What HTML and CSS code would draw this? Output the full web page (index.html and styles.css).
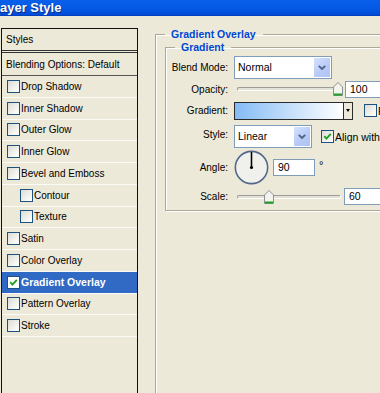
FILE: index.html
```html
<!DOCTYPE html>
<html lang="en">
<head>
	<meta charset="UTF-8">
	<title>Layer Style</title>
	<link rel="stylesheet" href="styles.css">
</head>
<body>
	<div class="titlebar"><span>Layer Style</span></div>
	<div class="main">
		<ul class="styles-list">
			<li class="head">Styles</li>
			<li class="blend">Blending Options: Default</li>
			<li><span class="cb"></span>Drop Shadow</li>
			<li><span class="cb"></span>Inner Shadow</li>
			<li><span class="cb"></span>Outer Glow</li>
			<li><span class="cb"></span>Inner Glow</li>
			<li><span class="cb"></span>Bevel and Emboss</li>
			<li class="sub"><span class="cb"></span>Contour</li>
			<li class="sub"><span class="cb"></span>Texture</li>
			<li><span class="cb"></span>Satin</li>
			<li><span class="cb"></span>Color Overlay</li>
			<li class="sel"><span class="cb on"><svg viewBox="0 0 11 11"><path d="M2.3 5.2 L4.4 7.6 L8.8 2.8"/></svg></span>Gradient Overlay</li>
			<li><span class="cb"></span>Pattern Overlay</li>
			<li><span class="cb"></span>Stroke</li>
		</ul>

		<fieldset class="group outer">
			<legend>Gradient Overlay</legend>
			<fieldset class="group inner">
				<legend>Gradient</legend>

				<div class="row r-blend">
					<label>Blend Mode:</label>
					<div class="combo c-blend"><span>Normal</span><i class="drop"><svg viewBox="0 0 8 5"><path d="M0.8 0.8 L4 4 L7.2 0.8"/></svg></i></div>
				</div>

				<div class="row r-opacity">
					<label>Opacity:</label>
					<div class="slider">
						<div class="track"></div>
						<svg class="thumb" style="left:96px" viewBox="0 0 10 14"><polygon points="0.5,13.5 0.5,5 5,0.5 9.5,5 9.5,13.5"/><line x1="1" y1="12.5" x2="9" y2="12.5"/></svg>
					</div>
					<div class="field f-opacity">100</div>
				</div>

				<div class="row r-gradient">
					<label>Gradient:</label>
					<div class="grad"><div class="grad-fill"></div><div class="grad-btn"></div></div>
					<span class="cb cb-rev"></span><span class="cb-text">Reverse</span>
				</div>

				<div class="row r-style">
					<label>Style:</label>
					<div class="combo c-style"><span>Linear</span><i class="drop"><svg viewBox="0 0 8 5"><path d="M0.8 0.8 L4 4 L7.2 0.8"/></svg></i></div>
					<span class="cb on cb-align"><svg viewBox="0 0 11 11"><path d="M2.3 5.2 L4.4 7.6 L8.8 2.8"/></svg></span><span class="cb-text">Align with Layer</span>
				</div>

				<div class="row r-angle">
					<label>Angle:</label>
					<div class="dial"><svg viewBox="0 0 36 36"><circle cx="18" cy="18" r="16.6"/><line x1="18" y1="2" x2="18" y2="18"/><circle class="dot" cx="18" cy="18" r="1.6"/></svg></div>
					<div class="field f-angle">90</div>
					<span class="deg">°</span>
				</div>

				<div class="row r-scale">
					<label>Scale:</label>
					<div class="slider">
						<div class="track"></div>
						<svg class="thumb" style="left:27px" viewBox="0 0 10 14"><polygon points="0.5,13.5 0.5,5 5,0.5 9.5,5 9.5,13.5"/><line x1="1" y1="12.5" x2="9" y2="12.5"/></svg>
					</div>
					<div class="field f-scale">60</div>
				</div>
			</fieldset>
		</fieldset>
	</div>
</body>
</html>
```

FILE: styles.css
```css
*{
	margin: 0;
	padding: 0;
	box-sizing: border-box;
}
body{
	width: 380px;
	height: 393px;
	overflow: hidden;
	background: #ECE9D8;
	font-family: "Liberation Sans", Arial, sans-serif;
	font-size: 10px;
	color: #000;
}
.titlebar{
	height: 16px;
	background: linear-gradient(#0A5FEA, #0358E4 60%, #004BD6);
	border-bottom: 1px solid #0040C0;
	overflow: hidden;
}
.titlebar span{
	display: block;
	margin-left: -8px;
	line-height: 16px;
	font-size: 13px;
	font-weight: bold;
	color: #fff;
	text-shadow: 1px 1px 0 #0A2B8A;
}
.main{
	display: flex;
	align-items: flex-start;
}

/* left list */
.styles-list{
	flex: none;
	list-style: none;
	width: 137px;
	height: 400px;
	margin: 12px 0 0 1px;
	border: 1px solid #111;
	border-bottom: none;
}
.styles-list li{
	display: flex;
	align-items: center;
	height: 21.75px;
	padding-left: 5px;
	border-bottom: 1px solid #FBFBF7;
	white-space: nowrap;
}
.styles-list li.head{
	height: 24px;
	padding-left: 4px;
	border-bottom: 3px double #333;
}
.styles-list li.blend{
	height: 23px;
	padding-left: 4px;
	border-bottom: 1px solid #555;
}
.styles-list li.sub{
	padding-left: 18px;
}
.styles-list li.sel{
	background: #316AC5;
	color: #fff;
	font-weight: bold;
	font-size: 10.5px;
}
.cb{
	display: inline-block;
	flex: none;
	width: 13px;
	height: 13px;
	margin-right: 1px;
	border: 1px solid #1C5180;
	background: linear-gradient(135deg, #DCDCD4, #F6F6F3 70%, #fff);
}
.cb svg{
	display: block;
	width: 11px;
	height: 11px;
}
.cb svg path{
	fill: none;
	stroke: #21A121;
	stroke-width: 1.9;
}
.sel .cb{
	background: #fff;
}

/* right groups */
.group{
	border: 1px solid #ACA899;
	box-shadow: inset 1px 1px 0 #fff, 1px 1px 0 #fff;
}
.group legend{
	padding: 0 7px 0 6px;
	line-height: 13px;
	font-size: 10.5px;
	font-weight: bold;
	color: #0046D5;
}
.outer{
	flex: none;
	width: 300px;
	height: 400px;
	margin: 12px 0 0 17px;
	padding: 0 0 0 9px;
}
.inner{
	width: 280px;
	padding: 2px 0 5px 0;
}
.inner > legend{
	margin-left: 9px;
}
.row{
	display: flex;
	align-items: center;
}
.row label{
	flex: none;
	width: 62px;
	margin-right: 6px;
	text-align: right;
	white-space: nowrap;
}
.r-blend{
	height: 23px;
	margin-bottom: 1px;
}
.r-opacity{
	height: 18px;
	margin-bottom: 4px;
}
.r-gradient{
	height: 17px;
	margin-bottom: 6px;
}
.r-style{
	height: 23px;
	margin-bottom: 2px;
}
.r-style label{
	margin-top: -5px;
}
.r-angle{
	height: 35px;
	margin-bottom: 3px;
}
.r-scale{
	height: 17px;
}

/* combo */
.combo{
	flex: none;
	display: flex;
	height: 23px;
	border: 1px solid #7F9DB9;
	background: #fff;
}
.combo span{
	flex: 1;
	padding-left: 3px;
	line-height: 21px;
	font-size: 10.5px;
}
.c-blend{
	width: 98px;
}
.c-style{
	width: 78px;
}
.drop{
	width: 16px;
	margin: 1px;
	background: linear-gradient(135deg, #D6E2FD, #B6C9F7 60%, #AFC3F3);
	display: flex;
	align-items: center;
	justify-content: center;
}
.drop svg{
	width: 8px;
	height: 5px;
}
.drop path{
	fill: none;
	stroke: #4D6185;
	stroke-width: 1.8;
}

/* slider */
.slider{
	flex: none;
	position: relative;
	width: 104px;
	height: 18px;
	margin-left: 3px;
	display: flex;
	align-items: center;
}
.track{
	width: 100%;
	height: 4px;
	border: 1px solid;
	border-color: #9D9C99 #fff #fff #9D9C99;
	border-radius: 2px;
	background: #E4E2D6;
}
.thumb{
	position: absolute;
	top: 2px;
	width: 10px;
	height: 14px;
}
.thumb polygon{
	fill: #F4F4EF;
	stroke: #8A8F98;
	stroke-width: 1;
}
.thumb line{
	stroke: #21A121;
	stroke-width: 2;
}

/* fields */
.field{
	flex: none;
	height: 17px;
	border: 1px solid #7F9DB9;
	background: #fff;
	padding-left: 4px;
	line-height: 15px;
	font-size: 10.5px;
}
.f-opacity{
	width: 45px;
	margin-left: 4px;
}
.f-scale{
	width: 45px;
	margin-left: 3px;
}
.f-angle{
	width: 42px;
	margin-left: 4px;
}
.deg{
	align-self: flex-start;
	margin: 9px 0 0 4px;
	font-size: 11px;
}

/* gradient */
.grad{
	flex: none;
	display: flex;
	width: 119px;
	height: 18px;
	border: 1px solid #2B2B2B;
}
.grad-fill{
	flex: 1;
	background: linear-gradient(90deg, #85BBF5, #C9E2FB 55%, #fff);
}
.grad-btn{
	width: 9px;
	border-left: 1px solid #2B2B2B;
	background: #ECE9D8;
	display: flex;
	align-items: center;
	justify-content: center;
}
.grad-btn::after{
	content: "";
	border-left: 2.5px solid transparent;
	border-right: 2.5px solid transparent;
	border-top: 3px solid #000;
}
.cb-rev{
	margin-left: 11px;
}
.cb-align{
	margin-left: 9px;
}
.cb-text{
	white-space: nowrap;
	font-size: 10.5px;
}

/* angle dial */
.dial{
	flex: none;
}
.dial svg{
	display: block;
	width: 35px;
	height: 35px;
}
.dial circle{
	fill: #F0F0EC;
	stroke: #52678A;
	stroke-width: 1.6;
}
.dial line{
	stroke: #000;
	stroke-width: 1.6;
}
.dial .dot{
	fill: #000;
	stroke: none;
}
```
